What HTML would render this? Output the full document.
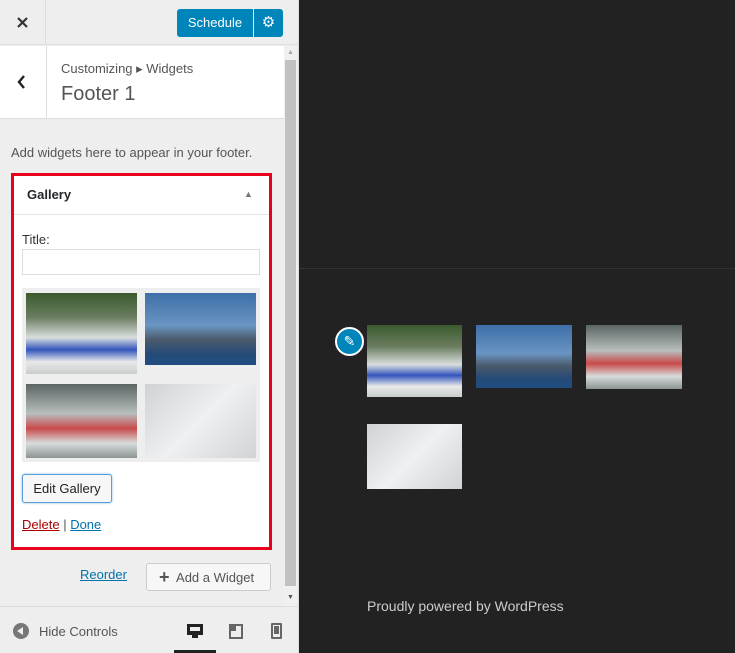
<!DOCTYPE html>
<html><head><style>
*{margin:0;padding:0;box-sizing:border-box}
body{width:735px;height:653px;overflow:hidden;font-family:"Liberation Sans",sans-serif;background:#222;position:relative;font-size:13px}
.a{position:absolute}
.side{left:0;top:0;width:299px;height:653px;background:#eee;border-right:1px solid #ddd}
</style></head><body>
<div class="a side">
  <div class="a" style="left:0;top:0;width:46px;height:45px;border-right:1px solid #ddd;border-bottom:1px solid #ddd"></div>
  <svg class="a" style="left:16px;top:16px" width="13" height="13" viewBox="0 0 13 13"><path d="M2 2L11 11M11 2L2 11" stroke="#333" stroke-width="2.2"/></svg>
  <div class="a" style="left:46px;top:0;width:253px;height:45px;border-bottom:1px solid #ddd"></div>
  <div class="a" style="left:177px;top:9px;width:76px;height:28px;background:#0085ba;border-radius:3px 0 0 3px;color:#fff;text-align:center;line-height:28px;font-size:13px">Schedule</div>
  <div class="a" style="left:254px;top:9px;width:29px;height:28px;background:#0085ba;border-radius:0 3px 3px 0;color:#fff;text-align:center;line-height:28px;font-size:15px">⚙</div>
  <div class="a" style="left:0;top:46px;width:284px;height:73px;background:#fff;border-bottom:1px solid #ddd"></div>
  <div class="a" style="left:46px;top:46px;width:1px;height:73px;background:#ddd"></div>
  <svg class="a" style="left:17px;top:75px" width="9" height="14" viewBox="0 0 9 14"><path d="M7 1L2 7L7 13" stroke="#222" stroke-width="2.4" fill="none"/></svg>
  <div class="a" style="left:61px;top:61px;color:#555;font-size:13px">Customizing ▸ Widgets</div>
  <div class="a" style="left:61px;top:83px;color:#555;font-size:20px">Footer 1</div>
  <div class="a" style="left:284px;top:46px;width:13px;height:560px;background:#f0f0f0"></div>
  <div class="a" style="left:285px;top:60px;width:11px;height:526px;background:#c1c1c1"></div>
  <div class="a" style="left:287px;top:49px;font-size:7px;color:#aaa">▲</div>
  <div class="a" style="left:287px;top:594px;font-size:7px;color:#555">▼</div>
  <div class="a" style="left:11px;top:145px;color:#555;font-size:13px">Add widgets here to appear in your footer.</div>
  <div class="a" style="left:11px;top:173px;width:261px;height:377px;border:3px solid #e8001c;background:#fff"></div>
  <div class="a" style="left:14px;top:214px;width:255px;height:1px;background:#e5e5e5"></div>
  <div class="a" style="left:27px;top:187px;font-weight:bold;font-size:13px;color:#23282d">Gallery</div>
  <div class="a" style="left:244px;top:189px;font-size:9px;color:#777">▲</div>
  <div class="a" style="left:22px;top:232px;font-size:13px;color:#333">Title:</div>
  <div class="a" style="left:22px;top:249px;width:238px;height:26px;border:1px solid #ddd"></div>
  <div class="a" style="left:22px;top:288px;width:238px;height:174px;background:#eee"></div>
  <div class="a" style="left:26px;top:293px;width:111px;height:81px;background:linear-gradient(180deg,#3a5a2e 0%,#6b7d60 30%,#d9dede 55%,#3355bb 70%,#e8eaea 85%,#c9cccc)"></div>
  <div class="a" style="left:145px;top:293px;width:111px;height:72px;background:linear-gradient(180deg,#3d6fa8 0%,#6a94c2 45%,#4a5a6a 65%,#254a78 85%,#1f4d80)"></div>
  <div class="a" style="left:26px;top:384px;width:111px;height:74px;background:linear-gradient(180deg,#5b6664 0%,#b8bfbd 40%,#c84a4a 60%,#d8dcdc 80%,#8c9593)"></div>
  <div class="a" style="left:145px;top:384px;width:111px;height:74px;background:linear-gradient(135deg,#cfd3d6 0%,#eef0f1 50%,#d0d4d6 100%)"></div>
  <div class="a" style="left:22px;top:474px;width:90px;height:29px;border:1px solid #5b9dd9;border-radius:3px;background:#f7f7f7;box-shadow:0 0 2px rgba(30,140,190,.6);text-align:center;line-height:27px;font-size:13px;color:#222">Edit Gallery</div>
  <div class="a" style="left:22px;top:517px;font-size:13px;color:#555"><span style="color:#a00;text-decoration:underline">Delete</span> | <span style="color:#0073aa;text-decoration:underline">Done</span></div>
  <div class="a" style="left:80px;top:567px;font-size:13px;color:#0073aa;text-decoration:underline">Reorder</div>
  <div class="a" style="left:146px;top:563px;width:125px;height:28px;border:1px solid #ccc;border-radius:3px;background:#f7f7f7;line-height:26px;font-size:13px;color:#555;padding-left:12px"><b style="font-size:18px;color:#555;vertical-align:-1px">+</b>&nbsp; Add a Widget</div>
  <div class="a" style="left:0;top:606px;width:298px;height:1px;background:#ddd"></div>
  <div class="a" style="left:13px;top:623px;width:16px;height:16px;border-radius:50%;background:#777"></div>
  <div class="a" style="left:17px;top:627px;width:0;height:0;border-top:4px solid transparent;border-bottom:4px solid transparent;border-right:6px solid #eee"></div>
  <div class="a" style="left:39px;top:624px;font-size:13px;color:#555">Hide Controls</div>
  <div class="a" style="left:187px;top:624px;width:16px;height:11px;background:#222;border:2px solid #222"></div>
  <div class="a" style="left:190px;top:627px;width:10px;height:4px;background:#eee"></div>
  <div class="a" style="left:192px;top:635px;width:6px;height:3px;background:#222"></div>
  <div class="a" style="left:174px;top:650px;width:42px;height:3px;background:#222"></div>
  <div class="a" style="left:229px;top:624px;width:14px;height:15px;border:2px solid #666"></div>
  <div class="a" style="left:231px;top:626px;width:5px;height:5px;background:#666"></div>
  <div class="a" style="left:271px;top:623px;width:11px;height:16px;border:2px solid #666;border-radius:1px"></div>
  <div class="a" style="left:274px;top:626px;width:5px;height:8px;background:#666"></div>
</div>
<div class="a" style="left:299px;top:268px;width:436px;height:1px;background:#333"></div>
<div class="a" style="left:367px;top:325px;width:95px;height:72px;background:linear-gradient(180deg,#3a5a2e 0%,#6b7d60 30%,#d9dede 55%,#3355bb 70%,#e8eaea 85%,#c9cccc)"></div>
<div class="a" style="left:476px;top:325px;width:96px;height:63px;background:linear-gradient(180deg,#3d6fa8 0%,#6a94c2 45%,#4a5a6a 65%,#254a78 85%,#1f4d80)"></div>
<div class="a" style="left:586px;top:325px;width:96px;height:64px;background:linear-gradient(180deg,#5b6664 0%,#b8bfbd 40%,#c84a4a 60%,#d8dcdc 80%,#8c9593)"></div>
<div class="a" style="left:367px;top:424px;width:95px;height:65px;background:linear-gradient(135deg,#cfd3d6 0%,#eef0f1 50%,#d0d4d6 100%)"></div>
<div class="a" style="left:335px;top:327px;width:29px;height:29px;border-radius:50%;background:#0085ba;border:2px solid #fff;color:#fff;text-align:center;line-height:25px;font-size:14px">✎</div>
<div class="a" style="left:367px;top:598px;font-size:14px;color:#ccc">Proudly powered by WordPress</div>
</body></html>
